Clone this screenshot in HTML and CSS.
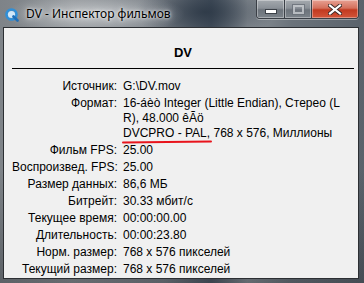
FILE: index.html
```html
<!DOCTYPE html>
<html lang="ru">
<head>
<meta charset="utf-8">
<title>DV - Инспектор фильмов</title>
<link rel="stylesheet" href="styles.css">
</head>
<body>
<div class="window">
  <div class="titlebar">
    <svg class="app-icon" width="14" height="14" viewBox="0 0 14 14">
      <circle cx="6.5" cy="6.5" r="5" fill="none" stroke="#2f8fd8" stroke-width="2.6"/>
      <circle cx="6.5" cy="6.5" r="3.6" fill="#cfe8fa"/>
      <path d="M8.5 8.5 L12.5 12.5" stroke="#1f6fb8" stroke-width="2.6" stroke-linecap="round"/>
    </svg>
    <span class="title">DV - Инспектор фильмов</span>
    <div class="controls">
      <div class="btn btn-min"><span class="min-glyph"></span></div>
      <div class="btn btn-max"><span class="max-glyph"></span></div>
      <div class="btn btn-close">
        <svg width="14" height="11" viewBox="0 0 14 11">
          <path d="M2 1.5 L12 9.5 M12 1.5 L2 9.5" stroke="#3a2a28" stroke-width="4" stroke-linecap="square"/>
          <path d="M2 1.5 L12 9.5 M12 1.5 L2 9.5" stroke="#ffffff" stroke-width="2.2" stroke-linecap="square"/>
        </svg>
      </div>
    </div>
  </div>
  <div class="client">
    <div class="heading">DV</div>
    <div class="rule"></div>
    <div class="info">
      <div class="label">Источник:</div><div class="value">G:\DV.mov</div>
      <div class="label">Формат:</div><div class="value">16-áèò Integer (Little Endian), Стерео (L<br>R), 48.000 êÃö<br><span class="marked">DVCPRO - PAL</span>, 768 x 576, Миллионы</div>
      <div class="label">Фильм FPS:</div><div class="value">25.00</div>
      <div class="label">Воспроизвед. FPS:</div><div class="value">25.00</div>
      <div class="label">Размер данных:</div><div class="value">86,6 МБ</div>
      <div class="label">Битрейт:</div><div class="value">30.33 мбит/с</div>
      <div class="label">Текущее время:</div><div class="value">00:00:00.00</div>
      <div class="label">Длительность:</div><div class="value">00:00:23.80</div>
      <div class="label">Норм. размер:</div><div class="value">768 x 576 пикселей</div>
      <div class="label">Текущий размер:</div><div class="value">768 x 576 пикселей</div>
    </div>
  </div>
</div>
</body>
</html>
```

FILE: styles.css
```css
html, body {
  margin: 0;
  padding: 0;
}
body {
  width: 364px;
  height: 283px;
  overflow: hidden;
  background:
    radial-gradient(ellipse 90px 22px at 95px 14px, rgba(235,238,240,0.55), rgba(235,238,240,0) 100%),
    radial-gradient(ellipse 70px 30px at 205px 12px, rgba(40,52,66,0.8), rgba(40,52,66,0) 100%),
    linear-gradient(90deg, #7e8388 0%, #8d9195 20%, #7a8087 45%, #4b5663 58%, #8a9096 68%, #6b737b 80%, #5a626b 100%);
}
.window {
  width: 364px;
  height: 283px;
  background: linear-gradient(180deg, rgba(0,0,0,0) 0%, rgba(0,0,0,0) 60%, rgba(30,34,40,0.35) 100%);
}
.titlebar {
  display: flex;
  align-items: flex-start;
  height: 27px;
  padding-left: 5px;
  font-family: "Noto Sans", "Open Sans", sans-serif;
  font-size: 12px;
  color: #000;
}
.app-icon {
  margin-top: 8px;
  flex: none;
}
.title {
  margin-left: 7px;
  margin-top: 5px;
  line-height: 18px;
  text-shadow: 0 0 6px rgba(255,255,255,0.9), 0 0 3px rgba(255,255,255,0.8);
}
.controls {
  display: flex;
  margin-left: auto;
  margin-right: 5px;
  height: 18px;
  border: 1px solid #3a3f46;
  border-top: none;
  border-radius: 0 0 4px 4px;
  overflow: hidden;
  box-shadow: 0 1px 0 rgba(255,255,255,0.35);
}
.btn {
  display: flex;
  align-items: center;
  justify-content: center;
  height: 18px;
  box-shadow: inset 0 0 0 1px rgba(255,255,255,0.35);
}
.btn-min {
  width: 27px;
  background: linear-gradient(180deg, #a4a9ae 0%, #8a9097 45%, #6c737b 55%, #7c838a 100%);
  border-right: 1px solid #3a3f46;
}
.btn-max {
  width: 26px;
  background: linear-gradient(180deg, #a4a9ae 0%, #8a9097 45%, #6c737b 55%, #7c838a 100%);
  border-right: 1px solid #3a3f46;
}
.btn-close {
  width: 46px;
  background: linear-gradient(180deg, #e8a193 0%, #d4705c 45%, #c23a20 55%, #d3553a 100%);
}
.min-glyph {
  display: block;
  width: 10px;
  height: 3px;
  margin-top: 4px;
  background: #fff;
  box-shadow: 0 0 0 1px #3c4148;
}
.max-glyph {
  display: block;
  width: 7px;
  height: 5px;
  border: 2px solid #c8ccd0;
  box-shadow: 0 0 0 1px #6a7078;
  opacity: 0.8;
}
.client {
  margin: 0 5px 0 3px;
  height: 250px;
  background: #f0f0f0;
  border: 1px solid #2c2f33;
  font-family: "Liberation Sans", Arial, sans-serif;
  font-size: 12px;
  color: #000;
  padding: 0 4px 0 8px;
}
.heading {
  font-weight: bold;
  font-size: 13px;
  text-align: center;
  line-height: 16px;
  margin-top: 17px;
}
.rule {
  height: 1px;
  background: #000;
  margin-top: 7px;
}
.info {
  display: grid;
  grid-template-columns: 105px 1fr;
  column-gap: 6px;
  row-gap: 2px;
  margin-top: 10px;
  line-height: 15px;
  white-space: nowrap;
}
.label {
  text-align: right;
}
.marked {
  position: relative;
}
.marked::after {
  content: "";
  position: absolute;
  left: -1px;
  right: -5px;
  bottom: -3px;
  height: 2px;
  background: #e8141c;
  border-radius: 2px;
  transform: rotate(-0.6deg);
}
```
